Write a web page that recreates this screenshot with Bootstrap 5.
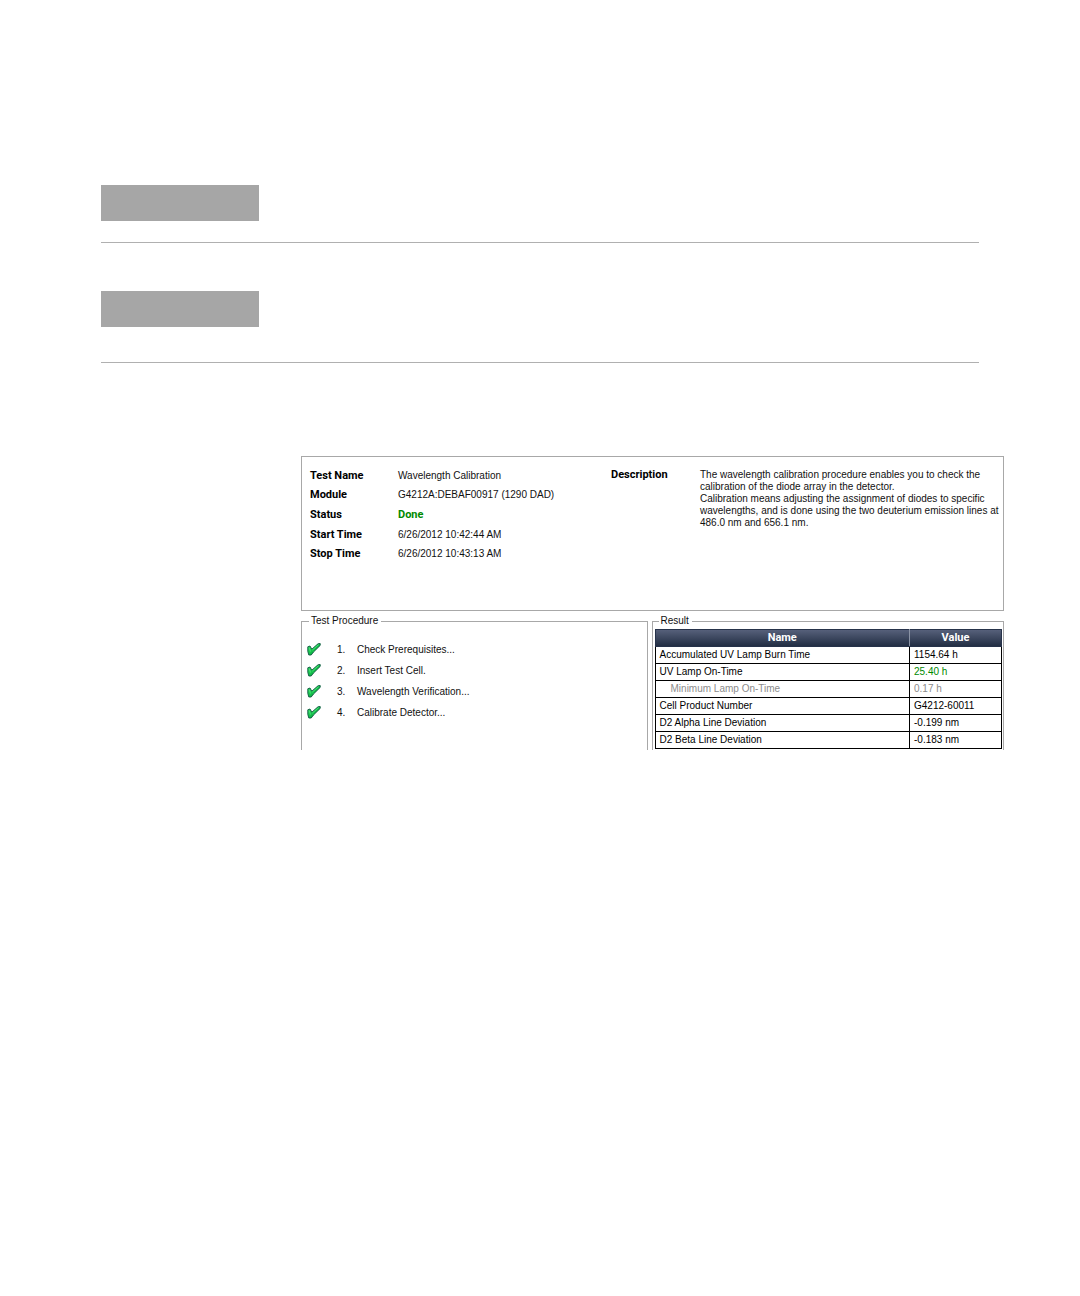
<!DOCTYPE html>
<html lang="en">
<head>
<meta charset="utf-8">
<meta name="viewport" content="width=device-width, initial-scale=1">
<title>Wavelength Calibration</title>
<link href="https://cdn.jsdelivr.net/npm/bootstrap@5.3.0/dist/css/bootstrap.min.css" rel="stylesheet">
<style>
  body { font-family: "Liberation Sans", Arial, sans-serif; font-size: 10px; line-height: 12px; color: #111; background: #fff; }
  .sheet { padding: 185px 101px 0; }
  .rule-band { border-bottom: 1px solid #b0b0b0; }
  .band-first { padding-bottom: 21px; }
  .band-second { padding: 48px 0 35px; }
  .gray-tab { width: 158px; height: 36px; background: #a6a6a6; }
  .report { margin: 93px 76px 0 301px; }
  .summary { border: 1px solid #a8a8a8; height: 155px; padding: 9px 8px; }
  .facts { width: 301px; height: 98px; }
  .facts dt { width: 88px; }
  .summary dt, .done, .values th { font-family: Roboto, "Liberation Sans", sans-serif; font-size: 11px; font-weight: 700; }
  .summary dt { color: #000; }
  .about dt { width: 89px; }
  .about { padding-top: 3px; white-space: nowrap; }
  .facts dd, .about dd { margin: 0; }
  .done { color: #008a00; }
  .panels { gap: 4px; margin-top: 3px; }
  .group-box { border: 1px solid #a8a8a8; border-bottom: 0; height: 136px; }
  .procedure { flex: 348 1 0; }
  .result { flex: 351 1 0; padding: 0 1px 0 2px; }
  .group-box legend { float: none; width: auto; font-size: 10px; line-height: 14px; margin: 0 0 0 7px; padding: 0 3px 0 2px; color: #111; }
  .steps { padding: 11px 0 0 5px; margin: 0; }
  .steps li { height: 21px; }
  .steps svg { width: 14px; height: 14px; margin-right: 16px; }
  .step-no { width: 20px; }
  .icon-defs { width: 0; height: 0; }
  .values { width: 100%; border-collapse: collapse; color: #000; margin-top: 1px; }
  .values th, .values td { border: 1px solid #000; height: 17px; padding: 0 4px; line-height: 12px; }
  .values thead tr { background: linear-gradient(#56607a, #1f2b40); }
  .values th { color: #fff; text-align: center; border-color: #26324a; border-right-color: #8a93a5; }
  .values th:last-child { width: 92px; border-right-color: #26324a; }
  .values .ok { color: #008a00; }
  .values .limit td { color: #8c8c8c; }
  .values .limit td:first-child { padding-left: 15px; }
</style>
<script src="https://cdn.jsdelivr.net/npm/bootstrap@5.3.0/dist/js/bootstrap.bundle.min.js"></script>
</head>
<body>
<svg class="icon-defs position-absolute" aria-hidden="true">
  <defs>
    <linearGradient id="leaf" x1="0" y1="0" x2="1" y2="1"><stop offset="0" stop-color="#3fe070"/><stop offset=".5" stop-color="#14c04a"/><stop offset="1" stop-color="#0a9440"/></linearGradient>
  </defs>
  <symbol id="tick" viewBox="0 0 14 14">
    <path d="M.8 3.8 3 3 4.8 6.2 11 .8 13.2 .5 13.2 2.4 6.5 9 4.2 12 1.8 12 .8 8.4Z" fill="url(#leaf)" stroke="#0d5540" stroke-width=".9" stroke-linejoin="round"/>
    <path d="M2.2 4.8 3.6 8.6M5.2 7.2 11.6 1.6" fill="none" stroke="#4fe87c" stroke-width=".8"/>
  </symbol>
</svg>
<header class="sheet">
  <div class="rule-band band-first"><div class="gray-tab"></div></div>
  <div class="rule-band band-second"><div class="gray-tab"></div></div>
</header>
<main class="report">
  <section class="summary d-flex">
    <dl class="facts d-flex flex-column justify-content-between flex-shrink-0 mb-0">
      <div class="d-flex flex-fill align-items-center"><dt>Test Name</dt><dd>Wavelength Calibration</dd></div>
      <div class="d-flex flex-fill align-items-center"><dt>Module</dt><dd>G4212A:DEBAF00917 (1290 DAD)</dd></div>
      <div class="d-flex flex-fill align-items-center"><dt>Status</dt><dd class="done">Done</dd></div>
      <div class="d-flex flex-fill align-items-center"><dt>Start Time</dt><dd>6/26/2012 10:42:44 AM</dd></div>
      <div class="d-flex flex-fill align-items-center"><dt>Stop Time</dt><dd>6/26/2012 10:43:13 AM</dd></div>
    </dl>
    <dl class="about d-flex mb-0">
      <dt class="flex-shrink-0">Description</dt>
      <dd>The wavelength calibration procedure enables you to check the<br>calibration of the diode array in the detector.<br>Calibration means adjusting the assignment of diodes to specific<br>wavelengths, and is done using the two deuterium emission lines at<br>486.0 nm and 656.1 nm.</dd>
    </dl>
  </section>
  <div class="panels d-flex">
    <fieldset class="group-box procedure">
      <legend>Test Procedure</legend>
      <ol class="steps list-unstyled">
        <li class="d-flex align-items-center"><svg aria-hidden="true"><use href="#tick"/></svg><span class="step-no">1.</span>Check Prerequisites...</li>
        <li class="d-flex align-items-center"><svg aria-hidden="true"><use href="#tick"/></svg><span class="step-no">2.</span>Insert Test Cell.</li>
        <li class="d-flex align-items-center"><svg aria-hidden="true"><use href="#tick"/></svg><span class="step-no">3.</span>Wavelength Verification...</li>
        <li class="d-flex align-items-center"><svg aria-hidden="true"><use href="#tick"/></svg><span class="step-no">4.</span>Calibrate Detector...</li>
      </ol>
    </fieldset>
    <fieldset class="group-box result">
      <legend class="ms-1">Result</legend>
      <table class="values">
        <thead><tr><th scope="col">Name</th><th scope="col">Value</th></tr></thead>
        <tbody>
          <tr><td>Accumulated UV Lamp Burn Time</td><td>1154.64 h</td></tr>
          <tr><td>UV Lamp On-Time</td><td class="ok">25.40 h</td></tr>
          <tr class="limit"><td>Minimum Lamp On-Time</td><td>0.17 h</td></tr>
          <tr><td>Cell Product Number</td><td>G4212-60011</td></tr>
          <tr><td>D2 Alpha Line Deviation</td><td>-0.199 nm</td></tr>
          <tr><td>D2 Beta Line Deviation</td><td>-0.183 nm</td></tr>
        </tbody>
      </table>
    </fieldset>
  </div>
</main>
</body>
</html>
